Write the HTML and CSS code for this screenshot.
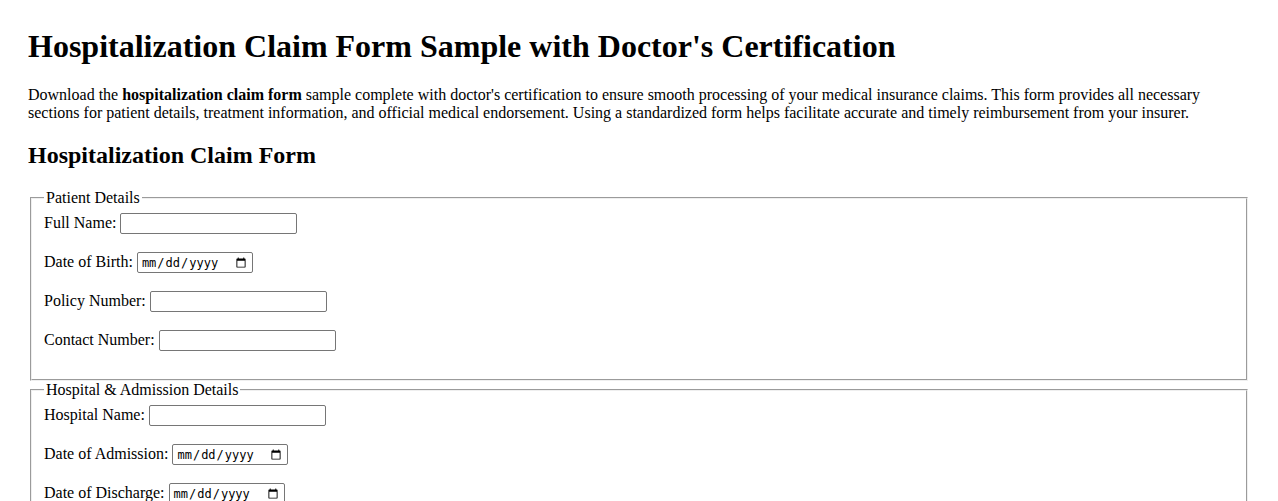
FILE: index.html
```html
<!DOCTYPE html>
<html lang="en">
<head>
<meta charset="utf-8">
<title>Hospitalization Claim Form Sample with Doctor's Certification</title>
<link rel="stylesheet" href="styles.css">
</head>
<body>
<h1 class="title">Hospitalization Claim Form Sample with Doctor's Certification</h1>
<p class="intro">Download the <strong>hospitalization claim form</strong> sample complete with doctor's certification to ensure smooth processing of your medical insurance claims. This form provides all necessary sections for patient details, treatment information, and official medical endorsement. Using a standardized form helps facilitate accurate and timely reimbursement from your insurer.</p>
<h2 class="form-title">Hospitalization Claim Form</h2>
<form class="claim-form">
  <fieldset class="section">
    <legend>Patient Details</legend>
    <div class="field"><label>Full Name: <input class="text-input" type="text"></label></div>
    <div class="field"><label>Date of Birth: <input class="date-input" type="date"></label></div>
    <div class="field"><label>Policy Number: <input class="text-input" type="text"></label></div>
    <div class="field"><label>Contact Number: <input class="text-input" type="text"></label></div>
  </fieldset>
  <fieldset class="section">
    <legend>Hospital &amp; Admission Details</legend>
    <div class="field"><label>Hospital Name: <input class="text-input" type="text"></label></div>
    <div class="field"><label>Date of Admission: <input class="date-input" type="date"></label></div>
    <div class="field"><label>Date of Discharge: <input class="date-input" type="date"></label></div>
    <div class="field"><label>Diagnosis: <input class="text-input" type="text"></label></div>
  </fieldset>
</form>
</body>
</html>
```
FILE: styles.css
```css
body {
  margin: 28px;
  font-family: "Liberation Serif", "Times New Roman", serif;
  font-size: 16px;
  color: #000;
  background: #fff;
}
.title {
  font-size: 32px;
  margin-top: 0;
}
.form-title {
  font-size: 24px;
}
.section {
  margin: 0 2px;
  padding-top: 6px;
  padding-bottom: 10px;
}
.field {
  margin-bottom: 18px;
}
.text-input,
.date-input {
  box-sizing: border-box;
  height: 21px;
  border: 1px solid #767676;
  border-radius: 2px;
  vertical-align: baseline;
}
.text-input {
  width: 177px;
}
.date-input {
  width: 116px;
  font-size: 12px;
  padding: 1px 3px;
}
```
